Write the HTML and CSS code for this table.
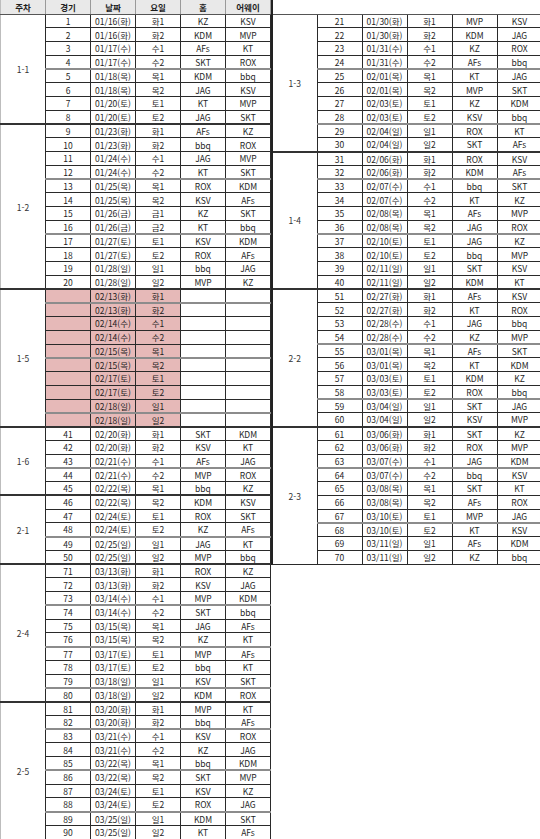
FILE: index.html
```html
<!DOCTYPE html>
<html lang="ko">
<head>
<meta charset="utf-8">
<title>일정표</title>
<link rel="stylesheet" href="styles.css">
</head>
<body>
<div class="sheet">
<table class="tbl left">
<colgroup><col><col><col><col><col><col></colgroup>
<thead>
<tr class="hd"><th>주차</th><th>경기</th><th>날짜</th><th>요일</th><th>홈</th><th>어웨이</th></tr>
</thead>
<tbody>
<tr><td class="wk" rowspan="8">1-1</td><td>1</td><td>01/16(화)</td><td>화1</td><td>KZ</td><td>KSV</td></tr>
<tr><td>2</td><td>01/16(화)</td><td>화2</td><td>KDM</td><td>MVP</td></tr>
<tr><td>3</td><td>01/17(수)</td><td>수1</td><td>AFs</td><td>KT</td></tr>
<tr class="g"><td>4</td><td>01/17(수)</td><td>수2</td><td>SKT</td><td>ROX</td></tr>
<tr><td>5</td><td>01/18(목)</td><td>목1</td><td>KDM</td><td>bbq</td></tr>
<tr><td>6</td><td>01/18(목)</td><td>목2</td><td>JAG</td><td>KSV</td></tr>
<tr><td>7</td><td>01/20(토)</td><td>토1</td><td>KT</td><td>MVP</td></tr>
<tr><td>8</td><td>01/20(토)</td><td>토2</td><td>JAG</td><td>SKT</td></tr>

<tr class="top"><td class="wk" rowspan="12">1-2</td><td>9</td><td>01/23(화)</td><td>화1</td><td>AFs</td><td>KZ</td></tr>
<tr><td>10</td><td>01/23(화)</td><td>화2</td><td>bbq</td><td>ROX</td></tr>
<tr><td>11</td><td>01/24(수)</td><td>수1</td><td>JAG</td><td>MVP</td></tr>
<tr class="g"><td>12</td><td>01/24(수)</td><td>수2</td><td>KT</td><td>SKT</td></tr>
<tr><td>13</td><td>01/25(목)</td><td>목1</td><td>ROX</td><td>KDM</td></tr>
<tr><td>14</td><td>01/25(목)</td><td>목2</td><td>KSV</td><td>AFs</td></tr>
<tr><td>15</td><td>01/26(금)</td><td>금1</td><td>KZ</td><td>SKT</td></tr>
<tr class="g"><td>16</td><td>01/26(금)</td><td>금2</td><td>KT</td><td>bbq</td></tr>
<tr><td>17</td><td>01/27(토)</td><td>토1</td><td>KSV</td><td>KDM</td></tr>
<tr><td>18</td><td>01/27(토)</td><td>토2</td><td>ROX</td><td>AFs</td></tr>
<tr><td>19</td><td>01/28(일)</td><td>일1</td><td>bbq</td><td>JAG</td></tr>
<tr><td>20</td><td>01/28(일)</td><td>일2</td><td>MVP</td><td>KZ</td></tr>

<tr class="top g"><td class="wk" rowspan="10">1-5</td><td class="pk"></td><td class="pk">02/13(화)</td><td class="pk">화1</td><td></td><td></td></tr>
<tr><td class="pk"></td><td class="pk">02/13(화)</td><td class="pk">화2</td><td></td><td></td></tr>
<tr><td class="pk"></td><td class="pk">02/14(수)</td><td class="pk">수1</td><td></td><td></td></tr>
<tr><td class="pk"></td><td class="pk">02/14(수)</td><td class="pk">수2</td><td></td><td></td></tr>
<tr class="g"><td class="pk"></td><td class="pk">02/15(목)</td><td class="pk">목1</td><td></td><td></td></tr>
<tr><td class="pk"></td><td class="pk">02/15(목)</td><td class="pk">목2</td><td></td><td></td></tr>
<tr><td class="pk"></td><td class="pk">02/17(토)</td><td class="pk">토1</td><td></td><td></td></tr>
<tr><td class="pk"></td><td class="pk">02/17(토)</td><td class="pk">토2</td><td></td><td></td></tr>
<tr class="g"><td class="pk"></td><td class="pk">02/18(일)</td><td class="pk">일1</td><td></td><td></td></tr>
<tr><td class="pk"></td><td class="pk">02/18(일)</td><td class="pk">일2</td><td></td><td></td></tr>

<tr class="top"><td class="wk" rowspan="5">1-6</td><td>41</td><td>02/20(화)</td><td>화1</td><td>SKT</td><td>KDM</td></tr>
<tr><td>42</td><td>02/20(화)</td><td>화2</td><td>KSV</td><td>KT</td></tr>
<tr class="g"><td>43</td><td>02/21(수)</td><td>수1</td><td>AFs</td><td>JAG</td></tr>
<tr><td>44</td><td>02/21(수)</td><td>수2</td><td>MVP</td><td>ROX</td></tr>
<tr><td>45</td><td>02/22(목)</td><td>목1</td><td>bbq</td><td>KZ</td></tr>

<tr class="top"><td class="wk" rowspan="5">2-1</td><td>46</td><td>02/22(목)</td><td>목2</td><td>KDM</td><td>KSV</td></tr>
<tr><td>47</td><td>02/24(토)</td><td>토1</td><td>ROX</td><td>SKT</td></tr>
<tr class="g"><td>48</td><td>02/24(토)</td><td>토2</td><td>KZ</td><td>AFs</td></tr>
<tr><td>49</td><td>02/25(일)</td><td>일1</td><td>JAG</td><td>KT</td></tr>
<tr><td>50</td><td>02/25(일)</td><td>일2</td><td>MVP</td><td>bbq</td></tr>

<tr class="top"><td class="wk" rowspan="10">2-4</td><td>71</td><td>03/13(화)</td><td>화1</td><td>ROX</td><td>KZ</td></tr>
<tr><td>72</td><td>03/13(화)</td><td>화2</td><td>KSV</td><td>JAG</td></tr>
<tr class="g"><td>73</td><td>03/14(수)</td><td>수1</td><td>MVP</td><td>KDM</td></tr>
<tr><td>74</td><td>03/14(수)</td><td>수2</td><td>SKT</td><td>bbq</td></tr>
<tr><td>75</td><td>03/15(목)</td><td>목1</td><td>JAG</td><td>AFs</td></tr>
<tr class="g"><td>76</td><td>03/15(목)</td><td>목2</td><td>KZ</td><td>KT</td></tr>
<tr><td>77</td><td>03/17(토)</td><td>토1</td><td>MVP</td><td>AFs</td></tr>
<tr><td>78</td><td>03/17(토)</td><td>토2</td><td>bbq</td><td>KT</td></tr>
<tr class="g"><td>79</td><td>03/18(일)</td><td>일1</td><td>KSV</td><td>SKT</td></tr>
<tr><td>80</td><td>03/18(일)</td><td>일2</td><td>KDM</td><td>ROX</td></tr>

<tr class="top"><td class="wk" rowspan="10">2-5</td><td>81</td><td>03/20(화)</td><td>화1</td><td>MVP</td><td>KT</td></tr>
<tr class="g"><td>82</td><td>03/20(화)</td><td>화2</td><td>bbq</td><td>AFs</td></tr>
<tr><td>83</td><td>03/21(수)</td><td>수1</td><td>KSV</td><td>ROX</td></tr>
<tr><td>84</td><td>03/21(수)</td><td>수2</td><td>KZ</td><td>JAG</td></tr>
<tr class="g"><td>85</td><td>03/22(목)</td><td>목1</td><td>bbq</td><td>KDM</td></tr>
<tr><td>86</td><td>03/22(목)</td><td>목2</td><td>SKT</td><td>MVP</td></tr>
<tr><td>87</td><td>03/24(토)</td><td>토1</td><td>KSV</td><td>KZ</td></tr>
<tr class="g"><td>88</td><td>03/24(토)</td><td>토2</td><td>ROX</td><td>JAG</td></tr>
<tr><td>89</td><td>03/25(일)</td><td>일1</td><td>KDM</td><td>SKT</td></tr>
<tr><td>90</td><td>03/25(일)</td><td>일2</td><td>KT</td><td>AFs</td></tr>
</tbody>
</table>

<table class="tbl right">
<colgroup><col><col><col><col><col><col></colgroup>
<thead>
<tr class="hd blank"><th colspan="6"></th></tr>
</thead>
<tbody>
<tr><td class="wk" rowspan="10">1-3</td><td>21</td><td>01/30(화)</td><td>화1</td><td>MVP</td><td>KSV</td></tr>
<tr><td>22</td><td>01/30(화)</td><td>화2</td><td>KDM</td><td>JAG</td></tr>
<tr><td>23</td><td>01/31(수)</td><td>수1</td><td>KZ</td><td>ROX</td></tr>
<tr class="g"><td>24</td><td>01/31(수)</td><td>수2</td><td>AFs</td><td>bbq</td></tr>
<tr><td>25</td><td>02/01(목)</td><td>목1</td><td>KT</td><td>JAG</td></tr>
<tr><td>26</td><td>02/01(목)</td><td>목2</td><td>MVP</td><td>SKT</td></tr>
<tr><td>27</td><td>02/03(토)</td><td>토1</td><td>KZ</td><td>KDM</td></tr>
<tr class="g"><td>28</td><td>02/03(토)</td><td>토2</td><td>KSV</td><td>bbq</td></tr>
<tr><td>29</td><td>02/04(일)</td><td>일1</td><td>ROX</td><td>KT</td></tr>
<tr><td>30</td><td>02/04(일)</td><td>일2</td><td>SKT</td><td>AFs</td></tr>

<tr class="top"><td class="wk" rowspan="10">1-4</td><td>31</td><td>02/06(화)</td><td>화1</td><td>ROX</td><td>KSV</td></tr>
<tr class="g"><td>32</td><td>02/06(화)</td><td>화2</td><td>KDM</td><td>AFs</td></tr>
<tr><td>33</td><td>02/07(수)</td><td>수1</td><td>bbq</td><td>SKT</td></tr>
<tr><td>34</td><td>02/07(수)</td><td>수2</td><td>KT</td><td>KZ</td></tr>
<tr><td>35</td><td>02/08(목)</td><td>목1</td><td>AFs</td><td>MVP</td></tr>
<tr class="g"><td>36</td><td>02/08(목)</td><td>목2</td><td>JAG</td><td>ROX</td></tr>
<tr><td>37</td><td>02/10(토)</td><td>토1</td><td>JAG</td><td>KZ</td></tr>
<tr><td>38</td><td>02/10(토)</td><td>토2</td><td>bbq</td><td>MVP</td></tr>
<tr><td>39</td><td>02/11(일)</td><td>일1</td><td>SKT</td><td>KSV</td></tr>
<tr><td>40</td><td>02/11(일)</td><td>일2</td><td>KDM</td><td>KT</td></tr>

<tr class="top"><td class="wk" rowspan="10">2-2</td><td>51</td><td>02/27(화)</td><td>화1</td><td>AFs</td><td>KSV</td></tr>
<tr><td>52</td><td>02/27(화)</td><td>화2</td><td>KT</td><td>ROX</td></tr>
<tr><td>53</td><td>02/28(수)</td><td>수1</td><td>JAG</td><td>bbq</td></tr>
<tr class="g"><td>54</td><td>02/28(수)</td><td>수2</td><td>KZ</td><td>MVP</td></tr>
<tr><td>55</td><td>03/01(목)</td><td>목1</td><td>AFs</td><td>SKT</td></tr>
<tr><td>56</td><td>03/01(목)</td><td>목2</td><td>KT</td><td>KDM</td></tr>
<tr><td>57</td><td>03/03(토)</td><td>토1</td><td>KDM</td><td>KZ</td></tr>
<tr class="g"><td>58</td><td>03/03(토)</td><td>토2</td><td>ROX</td><td>bbq</td></tr>
<tr><td>59</td><td>03/04(일)</td><td>일1</td><td>SKT</td><td>JAG</td></tr>
<tr><td>60</td><td>03/04(일)</td><td>일2</td><td>KSV</td><td>MVP</td></tr>

<tr class="top"><td class="wk" rowspan="10">2-3</td><td>61</td><td>03/06(화)</td><td>화1</td><td>SKT</td><td>KZ</td></tr>
<tr><td>62</td><td>03/06(화)</td><td>화2</td><td>ROX</td><td>MVP</td></tr>
<tr class="g"><td>63</td><td>03/07(수)</td><td>수1</td><td>JAG</td><td>KDM</td></tr>
<tr><td>64</td><td>03/07(수)</td><td>수2</td><td>bbq</td><td>KSV</td></tr>
<tr><td>65</td><td>03/08(목)</td><td>목1</td><td>SKT</td><td>KT</td></tr>
<tr><td>66</td><td>03/08(목)</td><td>목2</td><td>AFs</td><td>ROX</td></tr>
<tr class="g"><td>67</td><td>03/10(토)</td><td>토1</td><td>MVP</td><td>JAG</td></tr>
<tr><td>68</td><td>03/10(토)</td><td>토2</td><td>KT</td><td>KSV</td></tr>
<tr><td>69</td><td>03/11(일)</td><td>일1</td><td>AFs</td><td>KDM</td></tr>
<tr><td>70</td><td>03/11(일)</td><td>일2</td><td>KZ</td><td>bbq</td></tr>
</tbody>
</table>
</div>
</body>
</html>
```

FILE: styles.css
```css
html, body {
  margin: 0;
  padding: 0;
  background: #ffffff;
}

.sheet {
  display: flex;
  align-items: flex-start;
  width: 540px;
}

.tbl {
  border-collapse: collapse;
  table-layout: fixed;
  width: 270px;
  font-family: "Noto Sans CJK KR", "Noto Sans", sans-serif;
  font-size: 8.5px;
  color: #1e1e1e;
}

.tbl col {
  width: 45px;
}

.tbl th,
.tbl td {
  padding: 0;
  line-height: 8px;
  text-align: center;
  vertical-align: middle;
  border: 1px solid #2a2a2a;
  white-space: nowrap;
  overflow: hidden;
}

.tbl tbody tr {
  height: 13.75px;
}

.hd {
  height: 14px;
}

.hd th {
  background: #e9e9e9;
  font-weight: 700;
  border-top: none;
  border-bottom: 1px solid #555;
  border-left: 1px solid #9a9a9a;
  border-right: 1px solid #9a9a9a;
}

.left {
  border-left: 1px solid #bdbdbd;
}

.left .hd th:first-child {
  border-left: 1px solid #bdbdbd;
}

.right {
  border-left: 2px solid #222;
  border-right: 1px solid #333;
}

.right .hd.blank th {
  background: #ffffff;
  border-left: 2px solid #222;
  border-right: none;
}

.tbl .wk {
  color: #333;
  border-left: none;
}

.left .wk {
  border-left: 1px solid #bdbdbd;
}

.right .wk {
  border-left: 2px solid #222;
}

.tbl tr.top td {
  border-top: 2px solid #333;
}

.tbl tr.g td:not(.wk) {
  border-bottom: 2px solid #8c8c8c;
}

.tbl td.pk {
  background: #e6b9b8;
}
```
